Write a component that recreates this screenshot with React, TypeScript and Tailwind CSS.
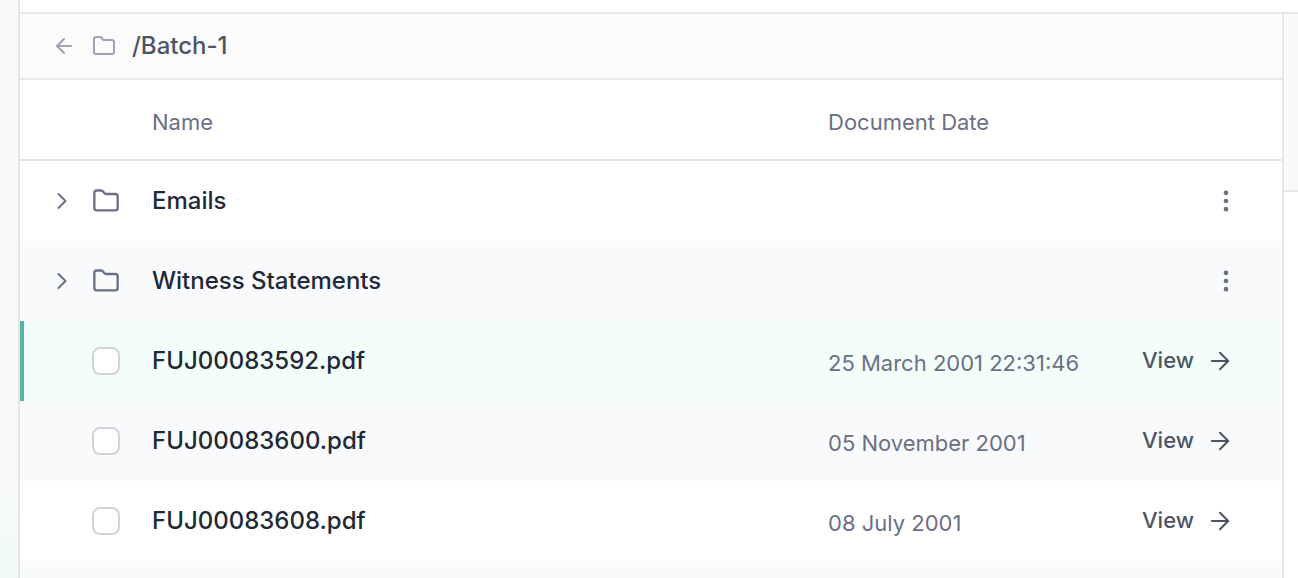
import { useState } from 'react'
import clsx from 'clsx'
import { ArrowLeft, ArrowRight, ChevronRight, EllipsisVertical } from 'lucide-react'

type FolderEntry = { name: string }
type FileEntry = { name: string; date: string }

const folders: FolderEntry[] = [{ name: 'Emails' }, { name: 'Witness Statements' }]

const files: FileEntry[] = [
  { name: 'FUJ00083592.pdf', date: '25 March 2001 22:31:46' },
  { name: 'FUJ00083600.pdf', date: '05 November 2001' },
  { name: 'FUJ00083608.pdf', date: '08 July 2001' },
]

function FolderIcon({ className }: { className?: string }) {
  return (
    <svg
      viewBox="0 0 24 24"
      className={className}
      fill="none"
      stroke="currentColor"
      strokeWidth={2}
      strokeLinecap="round"
      strokeLinejoin="round"
      aria-hidden="true"
    >
      <path d="M4 20h16a2 2 0 0 0 2-2V8a2 2 0 0 0-2-2h-7.93a2 2 0 0 1-1.66-.9l-.82-1.2A2 2 0 0 0 7.93 3H4a2 2 0 0 0-2 2v13c0 1.1.9 2 2 2Z" />
    </svg>
  )
}

function FolderRow({ folder }: { folder: FolderEntry }) {
  return (
    <tr className="h-20 even:bg-[#f9fafc]">
      <td className="pl-7">
        <button type="button" aria-label={`Expand ${folder.name}`} className="block text-[#6b7084]">
          <ChevronRight className="size-7" strokeWidth={1.75} />
        </button>
      </td>
      <td>
        <FolderIcon className="size-7 text-[#6b7084]" />
      </td>
      <td colSpan={2} className="text-2xl font-medium text-[#1f2937]">
        {folder.name}
      </td>
      <td className="pr-[42px]">
        <button type="button" aria-label={`${folder.name} options`} className="ml-auto block text-[#6b7084]">
          <EllipsisVertical className="size-7" />
        </button>
      </td>
    </tr>
  )
}

function FileRow({ file, active, onView }: { file: FileEntry; active: boolean; onView: () => void }) {
  return (
    <tr className={clsx('h-20', active ? 'bg-[#f3fefa]' : 'even:bg-[#f9fafc]')}>
      <td className={clsx(active && 'shadow-[inset_4px_0_0_#54b5a6]')} />
      <td>
        <input
          id={file.name}
          type="checkbox"
          className="block size-7 appearance-none rounded-lg border-2 border-[#d1d5db] bg-white checked:bg-[#54b5a6]"
        />
      </td>
      <td className="text-2xl font-medium text-[#1f2937]">
        <label htmlFor={file.name}>{file.name}</label>
      </td>
      <td className="pt-1 text-[22px] leading-8 text-[#6b7084]">{file.date}</td>
      <td>
        <button type="button" onClick={onView} className="flex items-center gap-3 text-[22px] font-medium text-[#4b5563]">
          <span className="pb-0.5 leading-8">View</span>
          <ArrowRight className="size-7" strokeWidth={1.75} />
        </button>
      </td>
    </tr>
  )
}

export default function App() {
  const [activeFile, setActiveFile] = useState(files[0].name)

  return (
    <div className="flex h-screen overflow-hidden bg-white font-['Inter',sans-serif]">
      <aside className="w-5 shrink-0 border-r-2 border-[#e5e5e5] bg-linear-to-b from-[#fafafa] from-80% to-[#effaf6]" />

      <div className="flex min-w-0 grow flex-col">
        <div className="h-3.5 shrink-0 border-b-2 border-gray-200" />

        <div className="flex min-h-0 grow">
          <main className="min-w-0 grow">
            <header className="flex h-[66px] items-center border-b-2 border-gray-200 bg-[#fbfbfb] pl-8 text-[#9ca3b4]">
              <button type="button" aria-label="Back">
                <ArrowLeft className="size-6" strokeWidth={2} />
              </button>
              <FolderIcon className="ml-4 size-6" />
              <h1 className="ml-4 text-2xl font-medium text-[#4b5563]">/Batch-1</h1>
            </header>

            <table className="w-full table-fixed border-separate border-spacing-0 text-left">
              <colgroup>
                <col className="w-[72px]" />
                <col className="w-[60px]" />
                <col />
                <col className="w-[314px]" />
                <col className="w-[140px]" />
              </colgroup>
              <thead>
                <tr className="h-[81px] text-[22px] text-[#6b7084] *:border-b-2 *:border-gray-200 *:pt-1.5 *:font-normal">
                  <td />
                  <td />
                  <th scope="col">Name</th>
                  <th scope="col">Document Date</th>
                  <td />
                </tr>
              </thead>
              <tbody>
                {folders.map((folder) => (
                  <FolderRow key={folder.name} folder={folder} />
                ))}
                {files.map((file) => (
                  <FileRow
                    key={file.name}
                    file={file}
                    active={file.name === activeFile}
                    onView={() => setActiveFile(file.name)}
                  />
                ))}
                <tr className="h-20 even:bg-[#f9fafc]">
                  <td colSpan={5} />
                </tr>
              </tbody>
            </table>
          </main>

          <section className="w-4 shrink-0 border-l-2 border-gray-200">
            <div className="h-[178px] border-b-2 border-gray-200 bg-[#f9fafc]" />
          </section>
        </div>
      </div>
    </div>
  )
}
